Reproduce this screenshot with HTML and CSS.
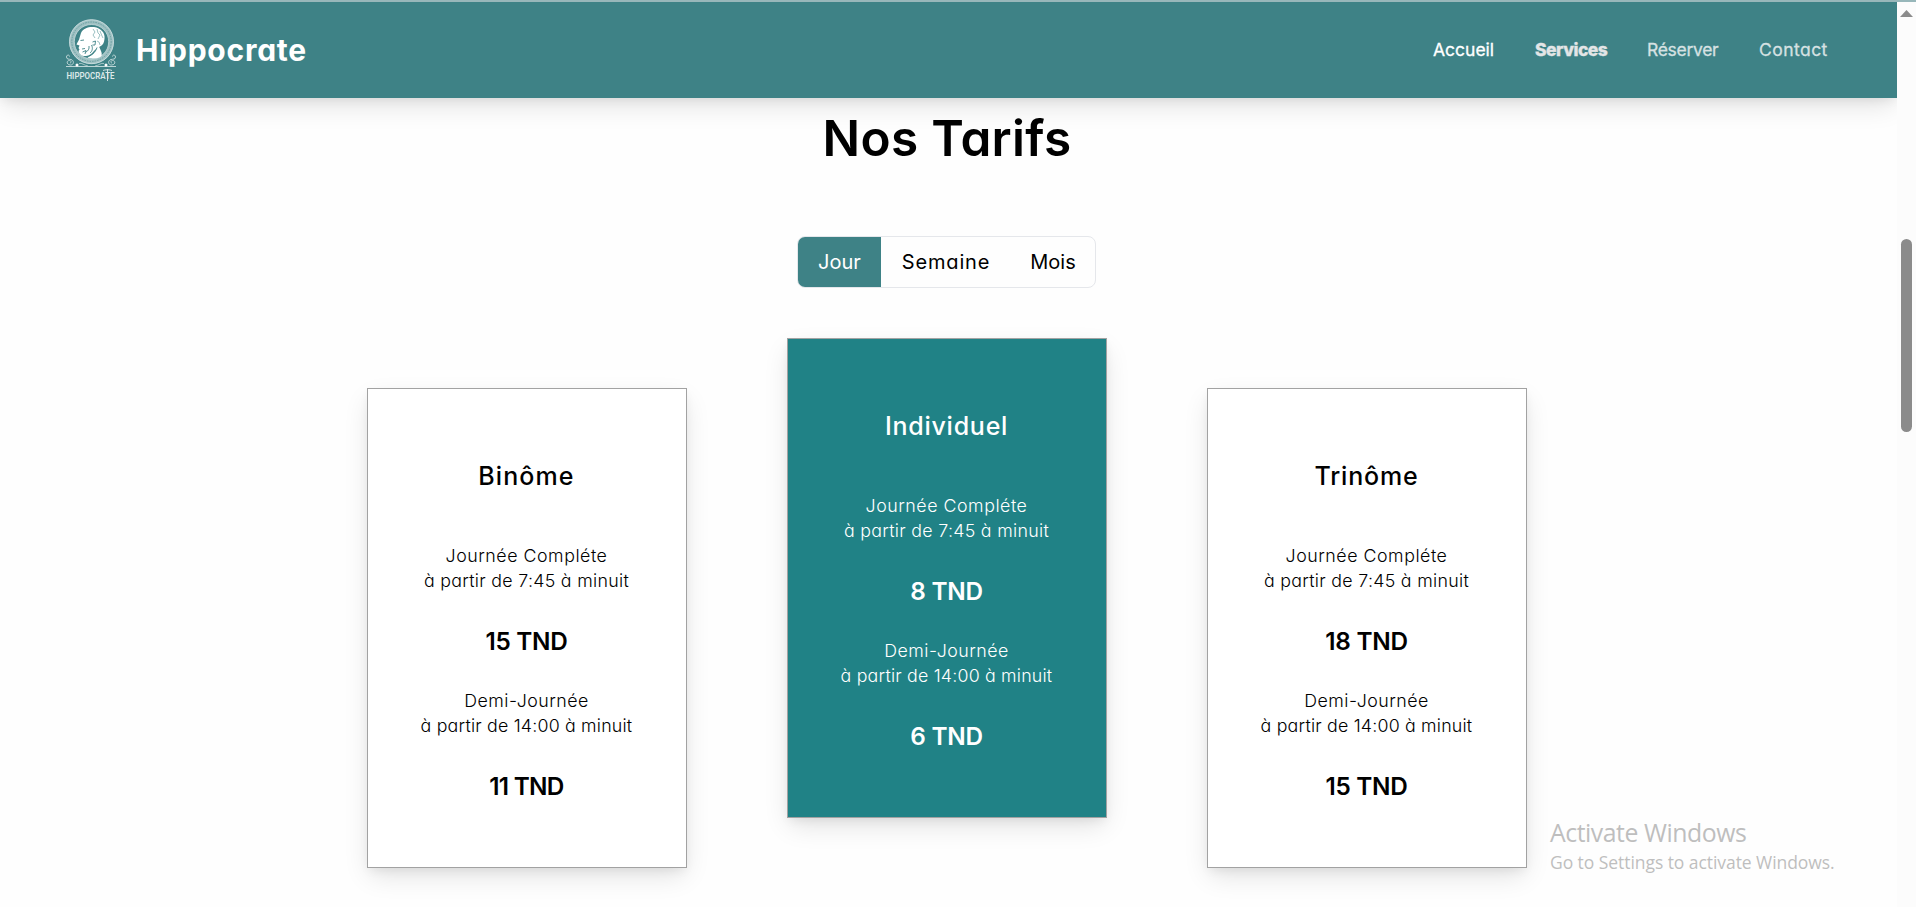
FILE: index.html
```html
<!DOCTYPE html>
<html lang="fr">
<head>
<meta charset="utf-8">
<title>Hippocrate</title>
<link rel="stylesheet" href="styles.css">
</head>
<body>
<div class="window">
  <div class="page">
    <header class="header">
      <a class="brand">
        <svg class="logo" width="52" height="66" viewBox="0 -1 52 66" fill="none" stroke="#fff">
          <circle cx="26.500" cy="23.700" r="19.700" stroke="#9fc1c3" stroke-width="5"/>
          <circle cx="26.500" cy="23.700" r="22" stroke="#d3e3e4" stroke-width=".8"/>
          <circle cx="26.500" cy="23.700" r="19.700" stroke="#6a9fa2" stroke-width="1" stroke-dasharray="1.600 1"/>
          <circle cx="26.500" cy="23.700" r="17.200" stroke="#d3e3e4" stroke-width=".7"/>
          <path fill="#fff" stroke="none" d="M16 15C18 10 24 8.500 29 9C36 10 40.500 15 39.500 21C39 25 38 27 35 28.500C32 30 30 32 28.500 33.500C26.500 36 24.500 37.500 21 38C17 38.500 14 36 13.500 33L14.500 31.500L13.500 30L14.500 27.500L11.500 26.500C12 24.500 14.500 22 14.500 20Z"/>
          <path fill="#fff" stroke="none" d="M34 28.500C35.500 32 37.500 35 36.500 38C33 41 26 41 22.500 39.500C26 37.500 30.500 35 31.500 30Z"/>
          <path stroke="#3e8286" stroke-width=".9" d="M15.500 22.500L19 22M17 31L20 30.500M17.500 34L21 32.500L20 36M24 28C24.500 31 23 33 21 34M26.500 27C28 30 27.500 33 25 35M27.500 24L30.500 23L30 27L27.500 27M32 29.500C31 33 28.500 36 24.500 38"/>
          <path stroke="#82b0b2" stroke-width=".8" d="M28 11L30 14L28 17L30 20M32 11L33 15L35 17L33 21M35 13L37 18L38 20M32 23L34 24L35 27"/>
          <path stroke="#bcd5d6" stroke-width="1" d="M1 48.500H51M4.500 38.500C4.500 36.500 1.500 36.500 1.500 39C1.500 41.500 4 41 6 41.500C9.500 42.500 9 47 5.500 47C1.500 47 1 42.500 4.500 42.500C6.500 42.500 6.500 45 5 45M47.500 38.500C47.500 36.500 50.500 36.500 50.500 39C50.500 41.500 48 41 46 41.500C42.500 42.500 43 47 46.500 47C50.500 47 51 42.500 47.500 42.500C45.500 42.500 45.500 45 47 45"/>
          <path stroke="#bcd5d6" stroke-width=".8" d="M14 45.500C17 44.500 19 47.500 23 48M39 45.500C36 44.500 34 47.500 30 48"/>
          <path fill="#fff" stroke="none" d="M12 45.500a1.500 1.500 0 1 1 0 3a1.500 1.500 0 0 1 0-3M41 45.500a1.500 1.500 0 1 1 0 3a1.500 1.500 0 0 1 0-3"/>
          <text class="logo-text" x="1.500" y="61.200" textLength="48" lengthAdjust="spacingAndGlyphs">HIPPOCRATE</text>
          <path stroke="#e0ebeb" stroke-width=".9" d="M42.500 51V63M38 52.500C40 51.500 45 51.500 47 52.500"/>
        </svg>
        <span class="brand-name">Hippocrate</span>
      </a>
      <nav class="nav">
        <a class="nav-link nav-home">Accueil</a>
        <a class="nav-link nav-services">Services</a>
        <a class="nav-link nav-book">Réserver</a>
        <a class="nav-link nav-contact">Contact</a>
      </nav>
    </header>
    <main class="pricing">
      <h1 class="title">Nos Tarifs</h1>
      <div class="tabs">
        <button class="tab tab-day">Jour</button>
        <button class="tab tab-week">Semaine</button>
        <button class="tab tab-month">Mois</button>
      </div>
      <div class="cards">
        <section class="card">
          <h2 class="name name-duo">Binôme</h2>
          <p class="slot"><span class="full">Journée Compléte</span><br><span class="from-morning">à partir de 7:45 à minuit</span></p>
          <p class="price">15 TND</p>
          <p class="slot"><span class="half">Demi-Journée</span><br><span class="from-noon">à partir de 14:00 à minuit</span></p>
          <p class="price price-tight">11 TND</p>
        </section>
        <section class="card card-featured">
          <h2 class="name name-solo">Individuel</h2>
          <p class="slot"><span class="full">Journée Compléte</span><br><span class="from-morning">à partir de 7:45 à minuit</span></p>
          <p class="price">8 TND</p>
          <p class="slot"><span class="half">Demi-Journée</span><br><span class="from-noon">à partir de 14:00 à minuit</span></p>
          <p class="price">6 TND</p>
        </section>
        <section class="card">
          <h2 class="name name-trio">Trinôme</h2>
          <p class="slot"><span class="full">Journée Compléte</span><br><span class="from-morning">à partir de 7:45 à minuit</span></p>
          <p class="price">18 TND</p>
          <p class="slot"><span class="half">Demi-Journée</span><br><span class="from-noon">à partir de 14:00 à minuit</span></p>
          <p class="price">15 TND</p>
        </section>
      </div>
    </main>
  </div>
  <div class="scrollbar">
    <svg class="arrow" width="13" height="7" viewBox="0 0 13 7"><path fill="#8b8b8b" d="M6.500 0L13 7H0Z"/></svg>
    <div class="thumb"></div>
  </div>
</div>
<div class="watermark">
  <div class="watermark-title">Activate Windows</div>
  <div class="watermark-text">Go to Settings to activate Windows.</div>
</div>
</body>
</html>
```
FILE: styles.css
```css
* { box-sizing: border-box; }
body {
  margin: 0;
  height: 907px;
  overflow: hidden;
  position: relative;
  background: #fefefe;
  color: #000;
  font-family: Inter, "Open Sans", sans-serif;
  font-feature-settings: "cv11";
}
h1, h2, p { margin: 0; }
.window { display: flex; height: 907px; border-top: 2px solid #98b7ba; }
.page { flex: 1; min-width: 0; overflow: hidden; }

.header {
  display: flex;
  align-items: center;
  justify-content: space-between;
  height: 96px;
  padding: 0 69px 0 65px;
  background: #3e8286;
  box-shadow: 0 10px 25px -3px rgba(0, 0, 0, .12), 0 4px 10px -2px rgba(0, 0, 0, .07);
}
.brand { display: flex; align-items: center; gap: 19px; color: #fff; }
.logo { display: block; overflow: visible; }
.logo-text { font: 600 9.800px Roboto, sans-serif; fill: #dce9e9; stroke: none; }
.brand-name { font-size: 30px; font-weight: 700; letter-spacing: .750px; line-height: 36px; }
.nav { display: flex; gap: 40px; font-size: 17.500px; line-height: 26px; color: #d6e1e2; }
.nav-home { width: 62px; color: #fff; letter-spacing: 0; -webkit-text-stroke: .3px #fff; }
.nav-services { width: 72px; font-weight: 800; color: #e3e5e6; letter-spacing: -.500px; -webkit-text-stroke: .3px #e3e5e6; }
.nav-book { width: 72px; letter-spacing: -.300px; -webkit-text-stroke: .3px #d6e1e2; }
.nav-contact { width: 69px; letter-spacing: .450px; -webkit-text-stroke: .3px #d6e1e2; }

.pricing { display: flex; flex-direction: column; align-items: center; padding: 4px 3px 0 0; }
.title { font-size: 49.500px; font-weight: 600; line-height: 72px; letter-spacing: .320px; }
.tabs {
  display: flex;
  width: 299px;
  height: 52px;
  margin: 62px 1px 0 0;
  border: 1px solid #e5e7eb;
  border-radius: 8px;
  overflow: hidden;
}
.tab {
  border: 0;
  padding: 0;
  background: none;
  color: #000;
  font: 400 20px/50px Inter, sans-serif;
  font-feature-settings: "cv11";
}
.tab-day { width: 83px; background: #3e8286; color: #fff; }
.tab-week { width: 130px; letter-spacing: .850px; }
.tab-month { width: 84px; }

.cards { display: flex; align-items: flex-start; gap: 100px; margin-top: 100px; }
.card {
  width: 320px;
  height: 480px;
  padding: 69px 1px 0 0;
  border: 1px solid #a2a2a2;
  background: #fff;
  text-align: center;
  box-shadow: 0 10px 25px -3px rgba(0, 0, 0, .12), 0 4px 10px -2px rgba(0, 0, 0, .07);
}
.card-featured { margin-top: -50px; background: #208286; color: #fff; }
.name { font-size: 25px; font-weight: 500; line-height: 36px; margin-bottom: 49px; }
.name-duo { letter-spacing: 1.100px; }
.name-solo { letter-spacing: .750px; }
.name-trio { letter-spacing: .850px; }
.slot { font-size: 17.800px; font-weight: 300; line-height: 25px; margin-bottom: 30px; white-space: nowrap; }
.full { letter-spacing: .530px; }
.from-morning { letter-spacing: .300px; }
.half { letter-spacing: .480px; }
.from-noon { letter-spacing: .200px; }
.price { font-size: 24.300px; font-weight: 600; line-height: 36px; letter-spacing: -.260px; margin-bottom: 29px; }
.price-tight { letter-spacing: -.730px; }

.scrollbar {
  display: flex;
  flex-direction: column;
  align-items: center;
  width: 19px;
  padding-top: 8px;
  background: #fcfcfc;
}
.thumb { width: 11px; height: 193px; margin-top: 222px; border-radius: 6px; background: #8b8b8b; }

.watermark {
  position: absolute;
  left: 1550px;
  top: 815px;
  color: #bebebe;
  font-family: "Open Sans", sans-serif;
  white-space: nowrap;
}
.watermark-title { font-size: 24.800px; line-height: 34px; letter-spacing: -.450px; }
.watermark-text { font-size: 17.500px; line-height: 26px; letter-spacing: -.060px; }
```
